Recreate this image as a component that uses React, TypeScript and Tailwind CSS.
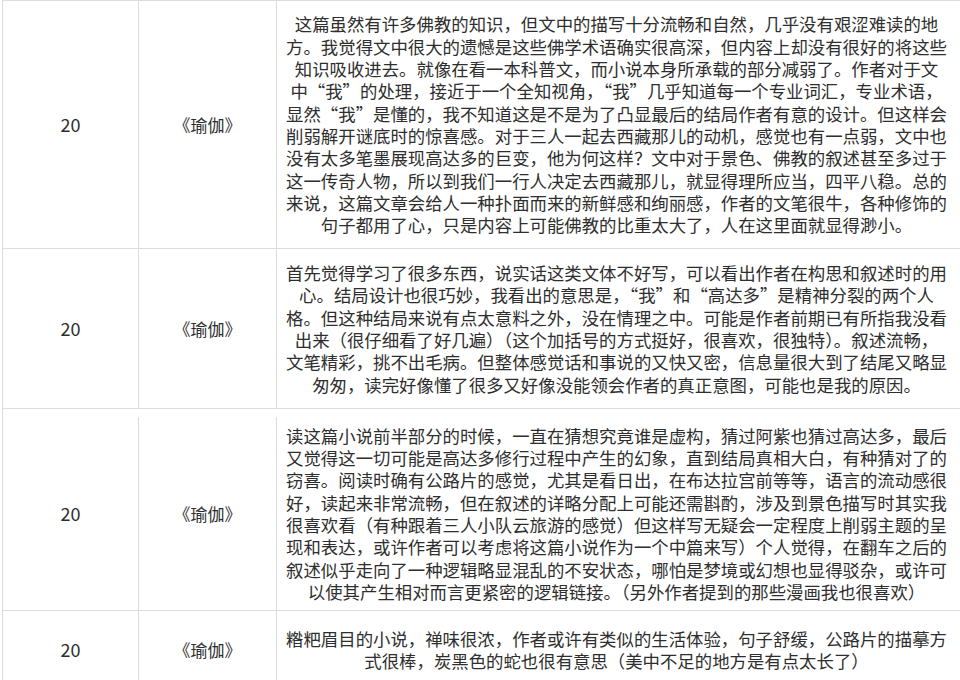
const ROWS: { score: string; title: string; height: string; lines: string[] }[] = [
  {
    score: '20',
    title: '《瑜伽》',
    height: 'h-[248px]',
    lines: [
      '这篇虽然有许多佛教的知识，但文中的描写十分流畅和自然，几乎没有艰涩难读的地',
      '方。我觉得文中很大的遗憾是这些佛学术语确实很高深，但内容上却没有很好的将这些',
      '知识吸收进去。就像在看一本科普文，而小说本身所承载的部分减弱了。作者对于文',
      '中“我”的处理，接近于一个全知视角，“我”几乎知道每一个专业词汇，专业术语，',
      '显然“我”是懂的，我不知道这是不是为了凸显最后的结局作者有意的设计。但这样会',
      '削弱解开谜底时的惊喜感。对于三人一起去西藏那儿的动机，感觉也有一点弱，文中也',
      '没有太多笔墨展现高达多的巨变，他为何这样？文中对于景色、佛教的叙述甚至多过于',
      '这一传奇人物，所以到我们一行人决定去西藏那儿，就显得理所应当，四平八稳。总的',
      '来说，这篇文章会给人一种扑面而来的新鲜感和绚丽感，作者的文笔很牛，各种修饰的',
      '句子都用了心，只是内容上可能佛教的比重太大了，人在这里面就显得渺小。',
    ],
  },
  {
    score: '20',
    title: '《瑜伽》',
    height: 'h-[160px]',
    lines: [
      '首先觉得学习了很多东西，说实话这类文体不好写，可以看出作者在构思和叙述时的用',
      '心。结局设计也很巧妙，我看出的意思是，“我”和“高达多”是精神分裂的两个人',
      '格。但这种结局来说有点太意料之外，没在情理之中。可能是作者前期已有所指我没看',
      '出来（很仔细看了好几遍）（这个加括号的方式挺好，很喜欢，很独特）。叙述流畅，',
      '文笔精彩，挑不出毛病。但整体感觉话和事说的又快又密，信息量很大到了结尾又略显',
      '匆匆，读完好像懂了很多又好像没能领会作者的真正意图，可能也是我的原因。',
    ],
  },
  {
    score: '20',
    title: '《瑜伽》',
    height: 'h-[202px] pt-[8px]',
    lines: [
      '读这篇小说前半部分的时候，一直在猜想究竟谁是虚构，猜过阿紫也猜过高达多，最后',
      '又觉得这一切可能是高达多修行过程中产生的幻象，直到结局真相大白，有种猜对了的',
      '窃喜。阅读时确有公路片的感觉，尤其是看日出，在布达拉宫前等等，语言的流动感很',
      '好，读起来非常流畅，但在叙述的详略分配上可能还需斟酌，涉及到景色描写时其实我',
      '很喜欢看（有种跟着三人小队云旅游的感觉）但这样写无疑会一定程度上削弱主题的呈',
      '现和表达，或许作者可以考虑将这篇小说作为一个中篇来写）个人觉得，在翻车之后的',
      '叙述似乎走向了一种逻辑略显混乱的不安状态，哪怕是梦境或幻想也显得驳杂，或许可',
      '以使其产生相对而言更紧密的逻辑链接。（另外作者提到的那些漫画我也很喜欢）',
    ],
  },
  {
    score: '20',
    title: '《瑜伽》',
    height: 'h-[78px]',
    lines: [
      '糌粑眉目的小说，禅味很浓，作者或许有类似的生活体验，句子舒缓，公路片的描摹方',
      '式很棒，炭黑色的蛇也很有意思（美中不足的地方是有点太长了）',
    ],
  },
]

export default function App() {
  return (
    <div
      className="w-[960px] h-[680px] overflow-hidden bg-white text-[#2e2e2e]"
      style={{ fontFamily: '"Noto Sans CJK SC", "Noto Sans", sans-serif' }}
    >
      <div className="ml-[2px] w-[1000px] border-l border-t border-[#dcdcdc]">
        {ROWS.map((row, i) => (
          <div key={i} className={`flex border-b border-[#dcdcdc] ${row.height}`}>
            <div className="w-[136px] shrink-0 flex items-center justify-center border-r border-[#dcdcdc] text-[18px]">
              {row.score}
            </div>
            <div className="w-[138px] shrink-0 flex items-center justify-center border-r border-[#dcdcdc] text-[17px]">
              {row.title}
            </div>
            <div className="w-[679px] shrink-0 flex flex-col items-center justify-center text-[17.4px]">
              {row.lines.map((line, j) => (
                <div key={j} className="h-[22.3px] flex items-center whitespace-nowrap">
                  <span className="leading-none">{line}</span>
                </div>
              ))}
            </div>
          </div>
        ))}
      </div>
    </div>
  )
}
